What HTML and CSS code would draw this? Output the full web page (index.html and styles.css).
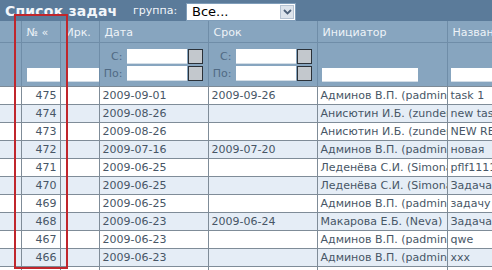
FILE: index.html
```html
<!DOCTYPE html>
<html lang="ru">
<head>
    <meta charset="UTF-8">
    <title>Список задач</title>
    <link rel="stylesheet" href="styles.css">
</head>
<body>
    <div class="panel">
        <div class="titlebar">
            <span class="title">Список задач</span>
            <span class="group-label">группа:</span>
            <div class="select">
                <span class="select-value">Все...</span>
                <span class="select-arrow">
                    <svg width="9" height="6" viewBox="0 0 9 6"><path d="M1 1 L4.5 4.5 L8 1" fill="none" stroke="#4d6078" stroke-width="1.8"/></svg>
                </span>
            </div>
        </div>
        <table class="grid">
            <colgroup>
                <col class="c-sel">
                <col class="c-num">
                <col class="c-irk">
                <col class="c-date">
                <col class="c-date">
                <col class="c-init">
                <col class="c-name">
            </colgroup>
            <thead>
                <tr class="head">
                    <th></th>
                    <th>№ «</th>
                    <th>Ирк.</th>
                    <th>Дата</th>
                    <th>Срок</th>
                    <th>Инициатор</th>
                    <th>Название</th>
                </tr>
                <tr class="filters">
                    <td></td>
                    <td class="f-bottom"><input class="f-input f-num" type="text"></td>
                    <td class="f-bottom"><input class="f-input f-irk" type="text"></td>
                    <td>
                        <div class="range">
                            <div class="range-row"><span class="range-label">С:</span><input class="f-input f-date" type="text"><span class="cal-btn"></span></div>
                            <div class="range-row"><span class="range-label">По:</span><input class="f-input f-date" type="text"><span class="cal-btn"></span></div>
                        </div>
                    </td>
                    <td>
                        <div class="range">
                            <div class="range-row"><span class="range-label">С:</span><input class="f-input f-date" type="text"><span class="cal-btn"></span></div>
                            <div class="range-row"><span class="range-label">По:</span><input class="f-input f-date" type="text"><span class="cal-btn"></span></div>
                        </div>
                    </td>
                    <td class="f-bottom"><input class="f-input f-init" type="text"></td>
                    <td class="f-bottom"><input class="f-input f-name" type="text"></td>
                </tr>
            </thead>
            <tbody>
                <tr><td></td><td class="num">475</td><td></td><td>2009-09-01</td><td>2009-09-26</td><td>Админов В.П. (padmin)</td><td>task 1</td></tr>
                <tr class="alt"><td></td><td class="num">474</td><td></td><td>2009-08-26</td><td></td><td>Анисютин И.Б. (zunder)</td><td>new task</td></tr>
                <tr><td></td><td class="num">473</td><td></td><td>2009-08-26</td><td></td><td>Анисютин И.Б. (zunder)</td><td>NEW REQUEST</td></tr>
                <tr class="alt"><td></td><td class="num">472</td><td></td><td>2009-07-16</td><td>2009-07-20</td><td>Админов В.П. (padmin)</td><td>новая</td></tr>
                <tr><td></td><td class="num">471</td><td></td><td>2009-06-25</td><td></td><td>Леденёва С.И. (Simona)</td><td>pflf1111</td></tr>
                <tr class="alt"><td></td><td class="num">470</td><td></td><td>2009-06-25</td><td></td><td>Леденёва С.И. (Simona)</td><td>Задача</td></tr>
                <tr><td></td><td class="num">469</td><td></td><td>2009-06-25</td><td></td><td>Админов В.П. (padmin)</td><td>задачу</td></tr>
                <tr class="alt"><td></td><td class="num">468</td><td></td><td>2009-06-23</td><td>2009-06-24</td><td>Макарова Е.Б. (Neva)</td><td>Задача</td></tr>
                <tr><td></td><td class="num">467</td><td></td><td>2009-06-23</td><td></td><td>Админов В.П. (padmin)</td><td>qwe</td></tr>
                <tr class="alt"><td></td><td class="num">466</td><td></td><td>2009-06-23</td><td></td><td>Админов В.П. (padmin)</td><td>xxx</td></tr>
                <tr><td></td><td class="num"></td><td></td><td></td><td></td><td></td><td></td></tr>
            </tbody>
        </table>
        <div class="highlight"></div>
    </div>
</body>
</html>
```

FILE: styles.css
```css
/* Task list grid */
body {
    margin: 0;
    padding: 0;
    overflow: hidden;
    background-color: #fff;
    font-family: 'DejaVu Sans', Verdana, sans-serif;
}
.panel {
    position: relative;
    width: 492px;
    height: 270px;
    overflow: hidden;
}
.titlebar {
    display: flex;
    align-items: center;
    height: 21px;
    padding-left: 5px;
    background-color: #5b7b9a;
    color: #f2f6fa;
}
.title {
    font-size: 14px;
    font-weight: bold;
    letter-spacing: 0.2px;
    width: 128px;
}
.group-label {
    font-size: 11px;
    width: 53px;
}
.select {
    display: flex;
    align-items: center;
    box-sizing: border-box;
    width: 110px;
    height: 18px;
    margin-top: 2px;
    background-color: #fff;
    border: 1px solid #7f9db9;
}
.select-value {
    flex: 1;
    padding-left: 5px;
    font-size: 13px;
    color: #000;
}
.select-arrow {
    display: flex;
    align-items: center;
    justify-content: center;
    width: 14px;
    height: 14px;
    margin-right: 1px;
    background-color: #dde4ec;
    border: 1px solid #b6c3d2;
    box-sizing: border-box;
}
.grid {
    border-collapse: collapse;
    table-layout: fixed;
    width: 550px;
    font-size: 11px;
}
.c-sel { width: 21px; }
.c-num { width: 39px; }
.c-irk { width: 39px; }
.c-date { width: 109px; }
.c-init { width: 130px; }
.c-name { width: 103px; }
.head th {
    height: 19px;
    padding: 2px 5px 0;
    text-align: left;
    font-weight: normal;
    color: #eef3f8;
    background-color: #87a5bf;
    border-right: 1px solid #6f8da8;
    border-bottom: 1px solid #6f8da8;
    white-space: nowrap;
    overflow: hidden;
}
.filters td {
    height: 39px;
    padding: 0;
    background-color: #87a5bf;
    border-right: 1px solid #6f8da8;
    border-bottom: 1px solid #7d8a96;
}
.filters td.f-bottom {
    vertical-align: bottom;
    padding-bottom: 4px;
}
.f-input {
    display: block;
    box-sizing: border-box;
    height: 14px;
    padding: 0;
    margin: 0;
    background-color: #fff;
    border: none;
    border-bottom: 1px solid #d3dde6;
}
.f-num { width: 33px; margin-left: 5px; }
.f-irk { width: 32px; margin-left: 7px; }
.f-init { width: 96px; margin-left: 4px; }
.f-name { width: 96px; margin-left: 3px; }
.range {
    display: flex;
    flex-direction: column;
    gap: 2px;
    padding-top: 1px;
}
.range-row {
    display: flex;
    align-items: center;
}
.range-label {
    width: 23px;
    padding-right: 4px;
    text-align: right;
    color: #506a84;
}
.f-date {
    width: 60px;
    height: 15px;
}
.cal-btn {
    box-sizing: border-box;
    width: 15px;
    height: 15px;
    margin-left: 1px;
    background-color: #c3c8cd;
    border: 1px solid #2b3138;
}
tbody td {
    height: 17px;
    padding: 0 3px;
    color: #475666;
    background-color: #fff;
    border-right: 1px solid #7f8c98;
    border-bottom: 1px solid #7f8c98;
    white-space: nowrap;
    overflow: hidden;
}
tbody tr.alt td {
    background-color: #e5edf6;
}
tbody td.num {
    text-align: right;
}
.highlight {
    position: absolute;
    left: 14px;
    top: 14px;
    width: 54px;
    height: 255px;
    box-sizing: border-box;
    border: 2px solid #c0262c;
}
```
